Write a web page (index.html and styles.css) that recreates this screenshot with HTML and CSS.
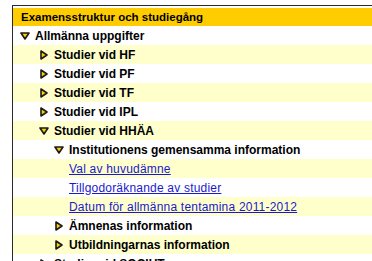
FILE: index.html
```html
<!DOCTYPE html>
<html lang="sv">
<head>
<meta charset="utf-8">
<title>Examensstruktur och studiegång</title>
<link rel="stylesheet" href="styles.css">
</head>
<body>
<div class="page">
  <div class="box">
    <div class="head">Examensstruktur och studiegång</div>
    <ul class="tree">
      <li class="row lvl0"><svg class="ico" width="10" height="10" viewBox="0 0 10 10"><path d="M1 2 H9 L5 8 Z" fill="#ffcc00" stroke="#1a1a1a" stroke-width="1.6" stroke-linejoin="round"/></svg><b>Allmänna uppgifter</b></li>
      <li class="row lvl1 alt"><svg class="ico" width="10" height="10" viewBox="0 0 10 10"><path d="M2 1 V9 L8 5 Z" fill="#ffcc00" stroke="#1a1a1a" stroke-width="1.6" stroke-linejoin="round"/></svg><b>Studier vid HF</b></li>
      <li class="row lvl1"><svg class="ico" width="10" height="10" viewBox="0 0 10 10"><path d="M2 1 V9 L8 5 Z" fill="#ffcc00" stroke="#1a1a1a" stroke-width="1.6" stroke-linejoin="round"/></svg><b>Studier vid PF</b></li>
      <li class="row lvl1 alt"><svg class="ico" width="10" height="10" viewBox="0 0 10 10"><path d="M2 1 V9 L8 5 Z" fill="#ffcc00" stroke="#1a1a1a" stroke-width="1.6" stroke-linejoin="round"/></svg><b>Studier vid TF</b></li>
      <li class="row lvl1"><svg class="ico" width="10" height="10" viewBox="0 0 10 10"><path d="M2 1 V9 L8 5 Z" fill="#ffcc00" stroke="#1a1a1a" stroke-width="1.6" stroke-linejoin="round"/></svg><b>Studier vid IPL</b></li>
      <li class="row lvl1 alt"><svg class="ico" width="10" height="10" viewBox="0 0 10 10"><path d="M1 2 H9 L5 8 Z" fill="#ffcc00" stroke="#1a1a1a" stroke-width="1.6" stroke-linejoin="round"/></svg><b>Studier vid HHÄA</b></li>
      <li class="row lvl2"><svg class="ico" width="10" height="10" viewBox="0 0 10 10"><path d="M1 2 H9 L5 8 Z" fill="#ffcc00" stroke="#1a1a1a" stroke-width="1.6" stroke-linejoin="round"/></svg><b>Institutionens gemensamma information</b></li>
      <li class="row lvl3 alt"><a href="#">Val av huvudämne</a></li>
      <li class="row lvl3"><a href="#">Tillgodoräknande av studier</a></li>
      <li class="row lvl3 alt"><a href="#">Datum för allmänna tentamina 2011-2012</a></li>
      <li class="row lvl2"><svg class="ico" width="10" height="10" viewBox="0 0 10 10"><path d="M2 1 V9 L8 5 Z" fill="#ffcc00" stroke="#1a1a1a" stroke-width="1.6" stroke-linejoin="round"/></svg><b>Ämnenas information</b></li>
      <li class="row lvl2 alt"><svg class="ico" width="10" height="10" viewBox="0 0 10 10"><path d="M2 1 V9 L8 5 Z" fill="#ffcc00" stroke="#1a1a1a" stroke-width="1.6" stroke-linejoin="round"/></svg><b>Utbildningarnas information</b></li>
      <li class="row lvl1"><svg class="ico" width="10" height="10" viewBox="0 0 10 10"><path d="M2 1 V9 L8 5 Z" fill="#ffcc00" stroke="#1a1a1a" stroke-width="1.6" stroke-linejoin="round"/></svg><b>Studier vid SOCIUT</b></li>
    </ul>
  </div>
</div>
</body>
</html>
```
FILE: styles.css
```css
html, body {
  margin: 0;
  padding: 0;
  background: #ffffff;
  overflow: hidden;
}
body {
  font-family: "Liberation Sans", Arial, sans-serif;
  font-size: 11px;
  color: #000;
}
.page {
  padding: 5px 0 0 12px;
}
.box {
  width: 420px;
  border-top: 1px solid #2a2a2a;
  border-left: 1px solid #2a2a2a;
  padding-top: 2px;
}
.head {
  background: #ffcc00;
  height: 18px;
  line-height: 18px;
  padding-left: 8px;
  font-weight: bold;
  font-size: 11.5px;
}
.tree {
  list-style: none;
  margin: 0;
  padding: 0;
}
.row {
  display: flex;
  align-items: center;
  height: 19px;
  white-space: nowrap;
}
.row.alt {
  background: #ffffcc;
}
.row b {
  font-weight: bold;
  font-size: 12px;
}
.ico {
  flex: none;
  margin-right: 5px;
}
.lvl0 { padding-left: 7px; }
.lvl1 { padding-left: 26px; }
.lvl2 { padding-left: 41px; }
.lvl3 { padding-left: 56px; }
.row a {
  color: #1a1acc;
  text-decoration: underline;
  font-size: 12px;
  letter-spacing: 0.2px;
}
```
